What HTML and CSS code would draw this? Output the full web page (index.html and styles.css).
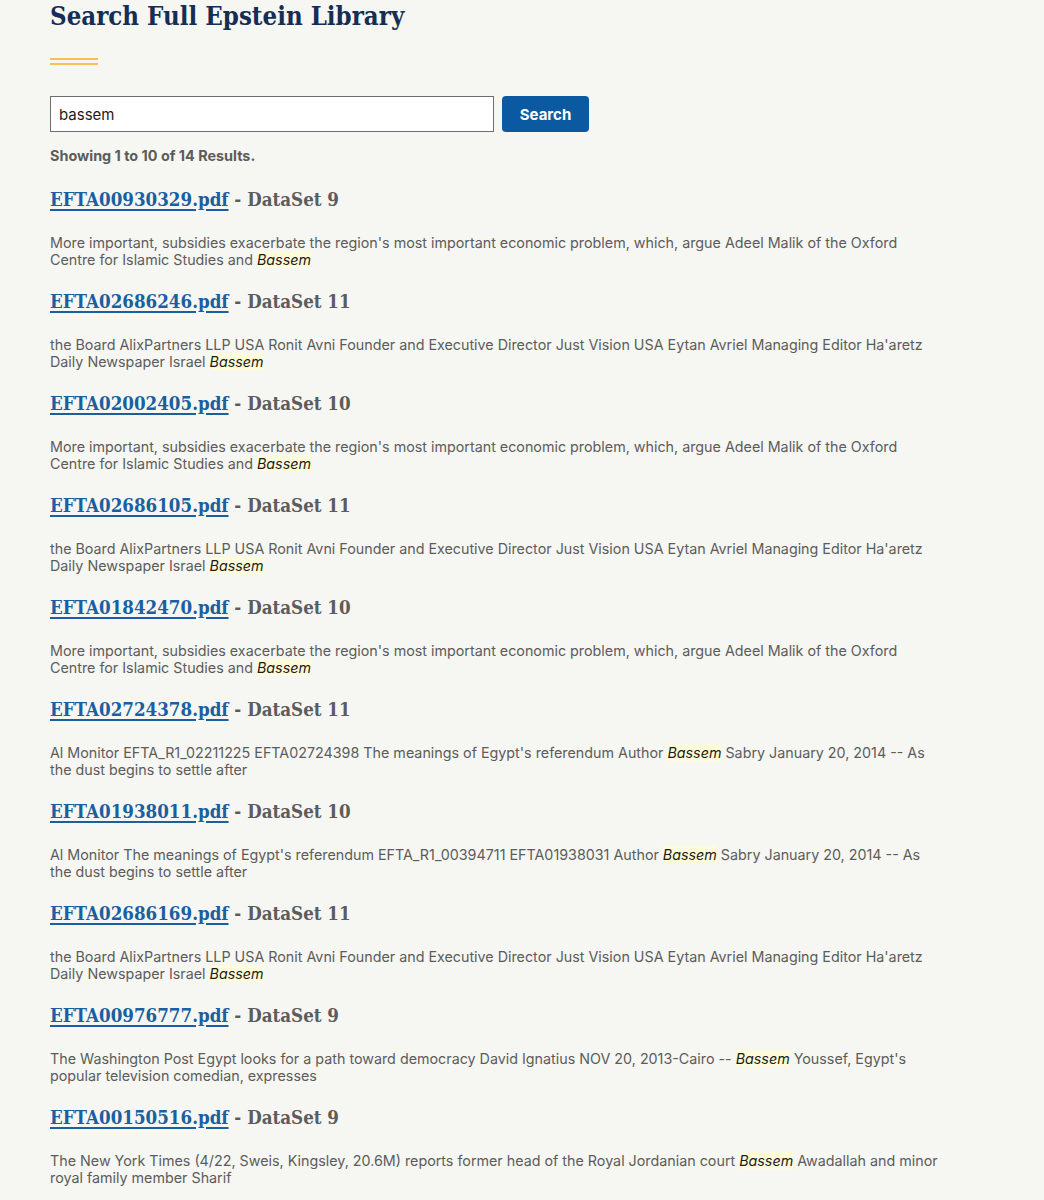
FILE: index.html
```html
<!DOCTYPE html>
<html>
<head>
<meta charset="utf-8">
<link rel="stylesheet" href="styles.css">
</head>
<body>
<main class="page">
  <h1 class="title">Search Full Epstein Library</h1>
  <div class="rule"></div>
  <form class="search" onsubmit="return false">
    <input class="search-input" type="text" value="bassem">
    <button class="search-btn" type="submit">Search</button>
  </form>
  <p class="count">Showing 1 to 10 of 14 Results.</p>

  <div class="result">
    <h3 class="result-title"><a href="#">EFTA00930329.pdf</a> - DataSet 9</h3>
    <p class="snippet">More important, subsidies exacerbate the region's most important economic problem, which, argue Adeel Malik of the Oxford Centre for Islamic Studies and <em class="hl">Bassem</em></p>
  </div>
  <div class="result">
    <h3 class="result-title"><a href="#">EFTA02686246.pdf</a> - DataSet 11</h3>
    <p class="snippet">the Board AlixPartners LLP USA Ronit Avni Founder and Executive Director Just Vision USA Eytan Avriel Managing Editor Ha'aretz Daily Newspaper Israel <em class="hl">Bassem</em></p>
  </div>
  <div class="result">
    <h3 class="result-title"><a href="#">EFTA02002405.pdf</a> - DataSet 10</h3>
    <p class="snippet">More important, subsidies exacerbate the region's most important economic problem, which, argue Adeel Malik of the Oxford Centre for Islamic Studies and <em class="hl">Bassem</em></p>
  </div>
  <div class="result">
    <h3 class="result-title"><a href="#">EFTA02686105.pdf</a> - DataSet 11</h3>
    <p class="snippet">the Board AlixPartners LLP USA Ronit Avni Founder and Executive Director Just Vision USA Eytan Avriel Managing Editor Ha'aretz Daily Newspaper Israel <em class="hl">Bassem</em></p>
  </div>
  <div class="result">
    <h3 class="result-title"><a href="#">EFTA01842470.pdf</a> - DataSet 10</h3>
    <p class="snippet">More important, subsidies exacerbate the region's most important economic problem, which, argue Adeel Malik of the Oxford Centre for Islamic Studies and <em class="hl">Bassem</em></p>
  </div>
  <div class="result">
    <h3 class="result-title"><a href="#">EFTA02724378.pdf</a> - DataSet 11</h3>
    <p class="snippet">Al Monitor EFTA_R1_02211225 EFTA02724398 The meanings of Egypt's referendum Author <em class="hl">Bassem</em> Sabry January 20, 2014 -- As the dust begins to settle after</p>
  </div>
  <div class="result">
    <h3 class="result-title"><a href="#">EFTA01938011.pdf</a> - DataSet 10</h3>
    <p class="snippet">Al Monitor The meanings of Egypt's referendum EFTA_R1_00394711 EFTA01938031 Author <em class="hl">Bassem</em> Sabry January 20, 2014 -- As the dust begins to settle after</p>
  </div>
  <div class="result">
    <h3 class="result-title"><a href="#">EFTA02686169.pdf</a> - DataSet 11</h3>
    <p class="snippet">the Board AlixPartners LLP USA Ronit Avni Founder and Executive Director Just Vision USA Eytan Avriel Managing Editor Ha'aretz Daily Newspaper Israel <em class="hl">Bassem</em></p>
  </div>
  <div class="result">
    <h3 class="result-title"><a href="#">EFTA00976777.pdf</a> - DataSet 9</h3>
    <p class="snippet">The Washington Post Egypt looks for a path toward democracy David Ignatius NOV 20, 2013-Cairo -- <em class="hl">Bassem</em> Youssef, Egypt's popular television comedian, expresses</p>
  </div>
  <div class="result">
    <h3 class="result-title"><a href="#">EFTA00150516.pdf</a> - DataSet 9</h3>
    <p class="snippet">The New York Times (4/22, Sweis, Kingsley, 20.6M) reports former head of the Royal Jordanian court <em class="hl">Bassem</em> Awadallah and minor royal family member Sharif</p>
  </div>
</main>
</body>
</html>
```

FILE: styles.css
```css
html, body {
  margin: 0;
  padding: 0;
  background: #f6f6f2;
}
body {
  font-family: Inter, "Liberation Sans", Arial, sans-serif;
  color: #5c5c5c;
}
.page {
  padding: 0 50px;
  width: 890px;
}
.title {
  font-family: "DejaVu Serif Condensed", "DejaVu Serif", serif;
  font-stretch: condensed;
  font-weight: bold;
  font-size: 25.6px;
  line-height: 32px;
  color: #162e51;
  margin: 0;
}
.rule {
  width: 48px;
  height: 3px;
  border-top: 2px solid #f5c24f;
  border-bottom: 2px solid #f5c24f;
  margin-top: 26px;
}
.search {
  display: flex;
  gap: 8px;
  margin-top: 31px;
}
.search-input {
  width: 444px;
  height: 36px;
  box-sizing: border-box;
  border: 1px solid #6f6f6f;
  background: #fff;
  font-family: Inter, "Liberation Sans", Arial, sans-serif;
  font-size: 15px;
  color: #1b1b1b;
  padding: 0 8px;
  margin: 0;
}
.search-btn {
  width: 87px;
  height: 36px;
  background: #0b5aa1;
  color: #fff;
  border: 0;
  border-radius: 4px;
  font-family: Inter, "Liberation Sans", Arial, sans-serif;
  font-weight: bold;
  font-size: 15px;
  margin: 0;
}
.count {
  font-weight: bold;
  font-size: 14.4px;
  line-height: 20px;
  margin: 14px 0 0 0;
  color: #5c5c5c;
}
.result-title {
  font-family: "DejaVu Serif Condensed", "DejaVu Serif", serif;
  font-stretch: condensed;
  font-weight: bold;
  font-size: 18.6px;
  line-height: 28px;
  color: #5c5c5c;
  margin: 20px 0 0 0;
}
.result:first-of-type .result-title {
  margin-top: 16px;
}
.result-title a {
  color: #1a5fa0;
  text-decoration: underline;
  text-decoration-thickness: 2px;
  text-underline-offset: 3px;
}
.snippet {
  font-size: 14.3px;
  line-height: 17px;
  margin: 20px 0 0 0;
}
.hl {
  background: #fdfbd9;
  color: #1b1b1b;
  font-style: italic;
}
```
